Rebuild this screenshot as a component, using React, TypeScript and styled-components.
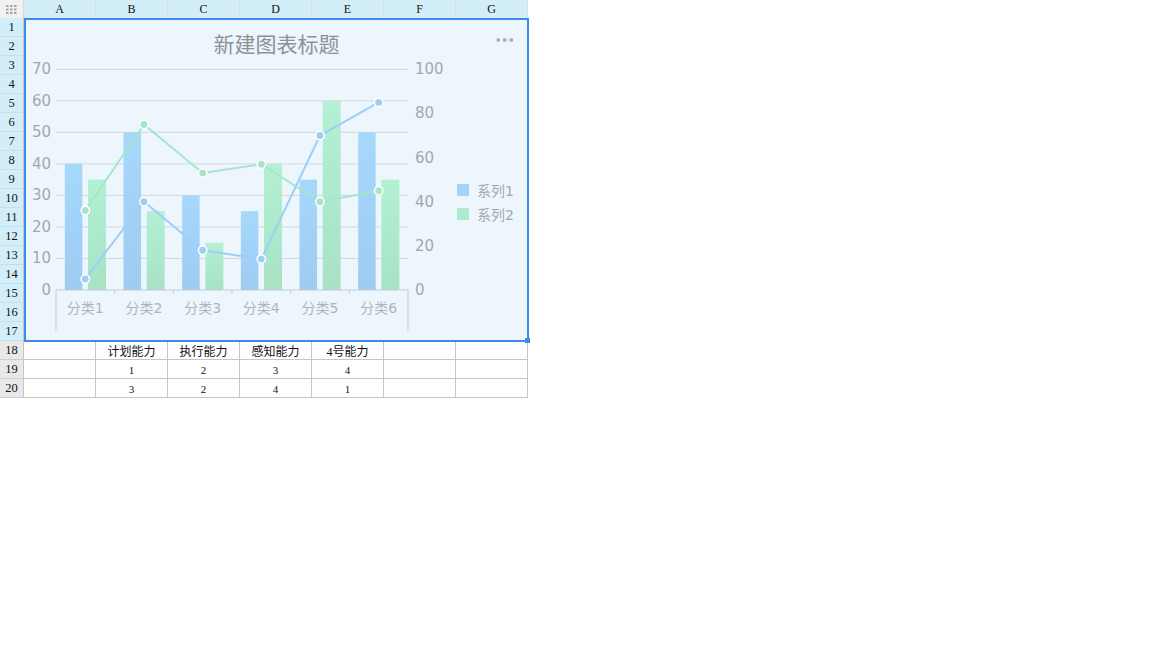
import { Fragment } from "react";
import styled, { createGlobalStyle } from "styled-components";

const GlobalStyle = createGlobalStyle`
  body {
    margin: 0;
    background: #ffffff;
  }
`;

const COLUMNS = ["A", "B", "C", "D", "E", "F", "G"];
const TABLE_ROWS = [
  ["", "计划能力", "执行能力", "感知能力", "4号能力", "", ""],
  ["", "1", "2", "3", "4", "", ""],
  ["", "3", "2", "4", "1", "", ""],
];

const CATEGORIES = ["分类1", "分类2", "分类3", "分类4", "分类5", "分类6"];
const BAR1 = [40, 50, 30, 25, 35, 50];
const BAR2 = [35, 25, 15, 40, 60, 35];
const LINE1 = [5, 40, 18, 14, 70, 85];
const LINE2 = [36, 75, 53, 57, 40, 45];

const Sheet = styled.div`
  display: grid;
  grid-template-columns: 24px repeat(7, 72px);
  grid-template-rows: 18px repeat(17, 19px) repeat(3, 19px);
  width: 528px;
  font-family: "Liberation Serif", "Noto Sans CJK SC", serif;
`;

const Corner = styled.div`
  box-sizing: border-box;
  background: #f1f1f1;
  border-right: 1px solid #d8d8d8;
  display: flex;
  align-items: center;
  justify-content: center;
`;

const ColHeader = styled.div`
  box-sizing: border-box;
  background: #d2eff9;
  border-right: 1px solid #d9dee1;
  display: flex;
  align-items: center;
  justify-content: center;
  font-size: 12px;
  color: #111;
`;

const RowHeader = styled.div<{ $active?: boolean }>`
  box-sizing: border-box;
  grid-column: 1;
  background: ${({ $active }) => ($active ? "#d2eff9" : "#e9e9e9")};
  border-bottom: 1px solid ${({ $active }) => ($active ? "#c9dde4" : "#cfcfcf")};
  border-right: 1px solid #c4c4c4;
  display: flex;
  align-items: center;
  justify-content: center;
  font-size: 12.5px;
  color: #111;
`;

const Cell = styled.div<{ $small?: boolean }>`
  box-sizing: border-box;
  border-right: 1px solid #c6c6c6;
  border-bottom: 1px solid #c6c6c6;
  display: flex;
  align-items: center;
  justify-content: center;
  padding-top: 1px;
  font-size: ${({ $small }) => ($small ? "11px" : "12px")};
  color: #111;
`;

const ChartPanel = styled.div`
  grid-column: 2 / 9;
  grid-row: 2 / 19;
  margin: 0 -1px -1px 0;
  position: relative;
  z-index: 1;
  border: 2px solid #3b8cee;
  background: #eef6fd;
  display: flex;
  flex-direction: column;
  font-family: "DejaVu Sans", "Noto Sans CJK SC", sans-serif;
`;

const TitleBar = styled.div`
  padding-top: 11px;
  height: 26px;
  line-height: 24px;
  text-align: center;
  font-family: "Noto Sans CJK SC", sans-serif;
  font-size: 21px;
  color: #8c9198;
`;

const MoreButton = styled.div`
  position: absolute;
  top: 17px;
  right: 13px;
  width: 18px;
  height: 6px;
  display: flex;
`;

const Handle = styled.div`
  position: absolute;
  right: -3px;
  bottom: -3px;
  width: 5px;
  height: 5px;
  background: #3b8cee;
`;

const Body = styled.div`
  display: flex;
  flex: 1;
`;

const Legend = styled.div`
  display: flex;
  flex-direction: column;
  padding: 121px 0 0 7px;
`;

const LegendItem = styled.div`
  display: flex;
  align-items: center;
  gap: 8px;
  height: 24px;
  font-size: 14px;
  color: #a3a8ae;
`;

const Swatch = styled.span<{ $color: string }>`
  width: 12px;
  height: 12px;
  background: ${({ $color }) => $color};
`;

const W = 424;
const H = 283;
const LEFT = 30;
const RIGHT = 382;
const TOP = 12.3;
const BOTTOM = 233;
const PH = BOTTOM - TOP;
const CAT = (RIGHT - LEFT) / 6;
const cx = (i: number) => LEFT + CAT * (i + 0.5);
const yLeft = (v: number) => BOTTOM - (v / 70) * PH;
const yRight = (v: number) => BOTTOM - (v / 100) * PH;

function Chart() {
  const labelColor = "#a3a8ae";
  const points1 = LINE1.map((v, i) => `${cx(i)},${yRight(v)}`).join(" ");
  const points2 = LINE2.map((v, i) => `${cx(i)},${yRight(v)}`).join(" ");

  return (
    <svg width={W} height={H} viewBox={`0 0 ${W} ${H}`}>
      <defs>
        <linearGradient id="blueBar" x1="0" y1="0" x2="0" y2="1">
          <stop offset="0" stopColor="#a6d8fc" />
          <stop offset="1" stopColor="#9ecbf2" />
        </linearGradient>
        <linearGradient id="greenBar" x1="0" y1="0" x2="0" y2="1">
          <stop offset="0" stopColor="#b3f0d4" />
          <stop offset="1" stopColor="#a7e2c5" />
        </linearGradient>
      </defs>

      {[0, 1, 2, 3, 4, 5, 6, 7].map((k) => (
        <g key={k}>
          {k > 0 && (
            <line
              x1={LEFT}
              x2={RIGHT}
              y1={yLeft(k * 10)}
              y2={yLeft(k * 10)}
              stroke="#d3d8de"
              strokeWidth={1}
            />
          )}
          <text
            x={25}
            y={yLeft(k * 10)}
            textAnchor="end"
            dominantBaseline="central"
            fontSize={15}
            fill={labelColor}
          >
            {k * 10}
          </text>
        </g>
      ))}

      {[0, 20, 40, 60, 80, 100].map((v) => (
        <text
          key={v}
          x={389}
          y={yRight(v)}
          dominantBaseline="central"
          fontSize={15}
          fill={labelColor}
        >
          {v}
        </text>
      ))}

      {BAR1.map((v, i) => (
        <rect
          key={`b1${i}`}
          x={cx(i) - 20.5}
          y={yLeft(v)}
          width={17.5}
          height={BOTTOM - yLeft(v)}
          fill="url(#blueBar)"
        />
      ))}
      {BAR2.map((v, i) => (
        <rect
          key={`b2${i}`}
          x={cx(i) + 2.7}
          y={yLeft(v)}
          width={18}
          height={BOTTOM - yLeft(v)}
          fill="url(#greenBar)"
        />
      ))}

      <line x1={LEFT} x2={RIGHT} y1={BOTTOM} y2={BOTTOM} stroke="#c5c9ce" />
      <line x1={LEFT} x2={LEFT} y1={BOTTOM} y2={273.7} stroke="#c5c9ce" />
      <line x1={RIGHT} x2={RIGHT} y1={BOTTOM} y2={273.7} stroke="#c5c9ce" />
      {[1, 2, 3, 4, 5].map((k) => (
        <line
          key={k}
          x1={LEFT + CAT * k}
          x2={LEFT + CAT * k}
          y1={BOTTOM}
          y2={BOTTOM + 4}
          stroke="#c5c9ce"
        />
      ))}

      {CATEGORIES.map((c, i) => (
        <text
          key={c}
          x={cx(i)}
          y={251}
          textAnchor="middle"
          dominantBaseline="central"
          fontSize={14}
          fill="#afb4ba"
        >
          {c}
        </text>
      ))}

      <polyline points={points2} fill="none" stroke="#a8e5c8" strokeWidth={2} />
      <polyline points={points1} fill="none" stroke="#9dcff6" strokeWidth={2} />

      {LINE2.map((v, i) => (
        <circle
          key={`p2${i}`}
          cx={cx(i)}
          cy={yRight(v)}
          r={4.2}
          fill="#a8e5c8"
          stroke="#ffffff"
          strokeWidth={1.5}
        />
      ))}
      {LINE1.map((v, i) => (
        <circle
          key={`p1${i}`}
          cx={cx(i)}
          cy={yRight(v)}
          r={4.2}
          fill="#9dcff6"
          stroke="#ffffff"
          strokeWidth={1.5}
        />
      ))}
    </svg>
  );
}

function GridIcon() {
  return (
    <svg width="11" height="9" viewBox="0 0 11 9">
      {[0, 1, 2].map((r) =>
        [0, 1, 2].map((c) => (
          <rect key={`${r}${c}`} x={c * 4} y={r * 3.5} width="2.5" height="2" fill="#a6a6a6" />
        ))
      )}
    </svg>
  );
}

export default function App() {
  return (
    <>
      <GlobalStyle />
      <Sheet>
        <Corner>
          <GridIcon />
        </Corner>
        {COLUMNS.map((c) => (
          <ColHeader key={c}>{c}</ColHeader>
        ))}

        {Array.from({ length: 17 }, (_, i) => (
          <RowHeader key={i} $active style={{ gridRow: i + 2 }}>
            {i + 1}
          </RowHeader>
        ))}

        <ChartPanel>
          <TitleBar>新建图表标题</TitleBar>
          <MoreButton>
            <svg width="18" height="6" viewBox="0 0 18 6">
              <circle cx="2.3" cy="3" r="2" fill="#abb1b8" />
              <circle cx="8.7" cy="3" r="2" fill="#abb1b8" />
              <circle cx="15.3" cy="3" r="2" fill="#abb1b8" />
            </svg>
          </MoreButton>
          <Body>
            <Chart />
            <Legend>
              <LegendItem>
                <Swatch $color="#a3d3f8" />
                系列1
              </LegendItem>
              <LegendItem>
                <Swatch $color="#aeebcf" />
                系列2
              </LegendItem>
            </Legend>
          </Body>
          <Handle />
        </ChartPanel>

        {TABLE_ROWS.map((row, r) => (
          <Fragment key={r}>
            <RowHeader>{r + 18}</RowHeader>
            {row.map((text, c) => (
              <Cell key={c} $small={r > 0}>
                {text}
              </Cell>
            ))}
          </Fragment>
        ))}
      </Sheet>
    </>
  );
}
